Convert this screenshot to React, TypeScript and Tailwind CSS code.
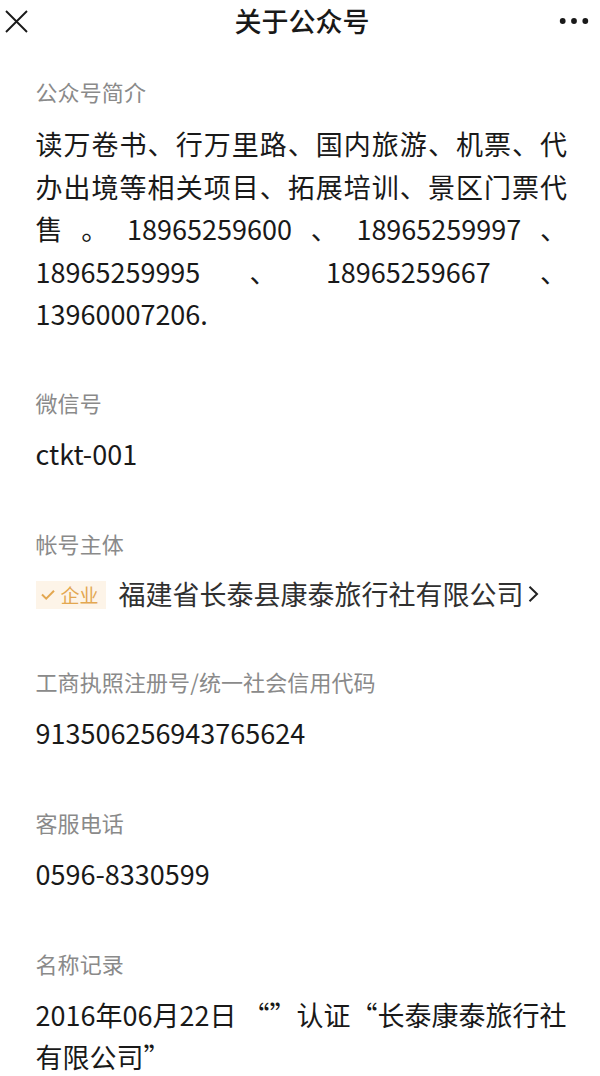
import React from "react";

function Label({ children }: { children: React.ReactNode }) {
  return (
    <h2 className="whitespace-nowrap text-[22px] leading-8 tracking-[0.1px] text-[#8a8a8a]">{children}</h2>
  );
}

function Value({ children }: { children: React.ReactNode }) {
  return <p className="mt-[15px] text-[27px] leading-[42px]">{children}</p>;
}

export default function App() {
  return (
    <div
      lang="zh-CN"
      className="h-[1076px] w-[600px] overflow-hidden bg-white font-['Noto_Sans_CJK_SC',sans-serif] text-[#191919]"
    >
      <header className="grid h-[42px] grid-cols-[1fr_auto_1fr] items-center pl-[5px] pr-[11px]">
        <svg width="23" height="23" viewBox="0 0 23 23" fill="none" stroke="#191919" strokeWidth="1.9">
          <path d="M1 1 22 22M22 1 1 22" />
        </svg>
        <h1 className="pl-[10px] text-[27px] font-medium leading-10">关于公众号</h1>
        <svg className="justify-self-end" width="30" height="8" viewBox="0 0 30 8" fill="#191919">
          <circle cx="3.7" cy="4" r="2.9" />
          <circle cx="15" cy="4" r="2.9" />
          <circle cx="26.3" cy="4" r="2.9" />
        </svg>
      </header>
      <main className="pl-[35.5px] pr-[33px] pt-[33px]">
        <section>
          <Label>公众号简介</Label>
          <p className="mt-4 text-justify text-[27px] leading-[42.5px]">
            读万卷书、行万里路、国内旅游、机票、代办出境等相关项目、拓展培训、景区门票代售。18965259600、18965259997、18965259995、18965259667、13960007206.
          </p>
        </section>
        <section className="mt-[50px]">
          <Label>微信号</Label>
          <Value>ctkt-001</Value>
        </section>
        <section className="mt-[52px]">
          <Label>帐号主体</Label>
          <div className="mt-[14px] flex h-[42px] items-center">
            <span className="mt-[3px] flex h-7 w-[70px] items-center bg-[#fdf4e8] pl-[5px] text-[19px] leading-7 text-[#e3a750]">
              <svg className="mr-[6px]" width="14" height="12" viewBox="0 0 14 12" fill="none" stroke="currentColor" strokeWidth="2">
                <path d="M1 5.5 5.2 9.7 13 1.8" />
              </svg>
              企业
            </span>
            <span className="ml-[13px] whitespace-nowrap text-[27px] leading-[42px] text-[#303030]">
              福建省长泰县康泰旅行社有限公司
            </span>
            <svg className="ml-1" width="11" height="18" viewBox="0 0 11 18" fill="none" stroke="#222" strokeWidth="2">
              <path d="M1.5 1.8 9 9 1.5 16.2" />
            </svg>
          </div>
        </section>
        <section className="mt-[50px]">
          <Label>工商执照注册号/统一社会信用代码</Label>
          <Value>913506256943765624</Value>
        </section>
        <section className="mt-[52px]">
          <Label>客服电话</Label>
          <Value>0596-8330599</Value>
        </section>
        <section className="mt-[52px]">
          <Label>名称记录</Label>
          <Value>
            2016年06月22日 “”认证“长泰康泰旅行社
            <br />
            有限公司”
          </Value>
        </section>
      </main>
    </div>
  );
}
